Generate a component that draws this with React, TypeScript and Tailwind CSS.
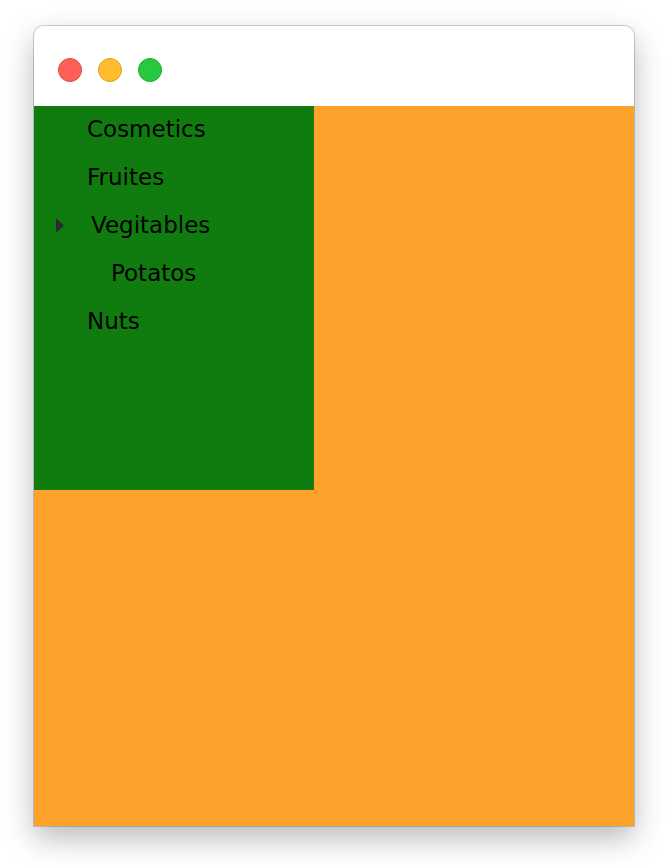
const items = [
  { label: "Cosmetics", indent: "pl-[53px]" },
  { label: "Fruites", indent: "pl-[53px]" },
  { label: "Vegitables", indent: "pl-[57px]", arrow: true },
  { label: "Potatos", indent: "pl-[77px]" },
  { label: "Nuts", indent: "pl-[53px]" },
];

export default function App() {
  return (
    <div className="w-[668px] h-[868px] bg-white pt-[26px] pl-[34px]">
      <div className="w-[600px] h-[800px] flex flex-col rounded-t-[10px] overflow-hidden shadow-[0_12px_30px_rgba(0,0,0,0.28),0_0_0_1px_rgba(0,0,0,0.18)]">
        <div className="h-[80px] bg-white flex items-center gap-4 pl-[24px] pt-2 shrink-0">
          <span className="w-6 h-6 rounded-full bg-[#ff5f57] border border-[#e2463f]" />
          <span className="w-6 h-6 rounded-full bg-[#febc2e] border border-[#e1a116]" />
          <span className="w-6 h-6 rounded-full bg-[#28c840] border border-[#1aab29]" />
        </div>
        <div className="flex-1 bg-[#fca22b]">
          <div className="w-[280px] h-[384px] bg-[#107c10] font-['DejaVu_Sans',sans-serif] text-[23px] text-black">
            {items.map((it) => (
              <div key={it.label} className={`relative h-[48px] flex items-center pb-[2px] ${it.indent}`}>
                {it.arrow && (
                  <svg className="absolute left-[22px] top-[16px]" width="8" height="15" viewBox="0 0 8 15">
                    <path d="M0 0 L8 7.5 L0 15 Z" fill="#2b2b2b" />
                  </svg>
                )}
                {it.label}
              </div>
            ))}
          </div>
        </div>
      </div>
    </div>
  );
}
